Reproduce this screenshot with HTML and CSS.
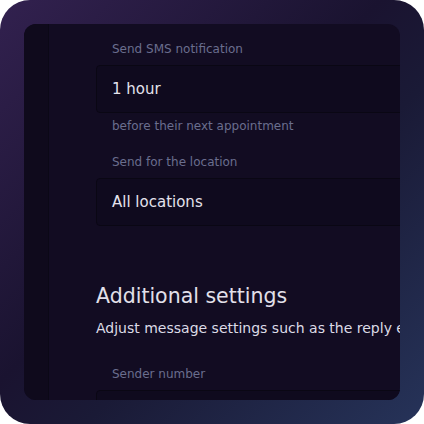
FILE: index.html
```html
<!DOCTYPE html>
<html>
<head>
<meta charset="utf-8">
<link rel="stylesheet" href="styles.css">
</head>
<body>
<div class="frame">
  <div class="panel">
    <div class="rail"></div>
    <div class="content">
      <div class="label">Send SMS notification</div>
      <div class="field">1 hour</div>
      <div class="helper">before their next appointment</div>
      <div class="label label-gap">Send for the location</div>
      <div class="field">All locations</div>
      <h2 class="heading">Additional settings</h2>
      <p class="desc">Adjust message settings such as the reply email and sender number</p>
      <div class="label label-gap2">Sender number</div>
      <div class="field"></div>
    </div>
  </div>
</div>
</body>
</html>
```

FILE: styles.css
```css
* { box-sizing: border-box; }
html, body { margin: 0; padding: 0; background: #ffffff; }
body { font-family: "DejaVu Sans", "Open Sans", sans-serif; }

.frame {
  width: 424px;
  height: 424px;
  border-radius: 30px;
  padding: 24px;
  background: linear-gradient(135deg, #32214f 0%, #1a1330 45%, #1a1a36 60%, #263359 100%);
}

.panel {
  width: 376px;
  height: 376px;
  border-radius: 12px;
  background: #120c22;
  display: flex;
  overflow: hidden;
}

.rail {
  width: 25px;
  flex: none;
  background: #0f0a1c;
  border-right: 1px solid #0b0816;
}

.content {
  flex: 1;
  min-width: 0;
  overflow: hidden;
  padding: 17px 0 0 47px;
}

.label, .helper {
  font-size: 12px;
  line-height: 16px;
  color: #6a6e8e;
  padding-left: 16px;
  white-space: nowrap;
}

.label { margin-bottom: 8px; }
.helper { margin-top: 5px; }
.label-gap { margin-top: 20px; }
.label-gap2 { margin-top: 28px; }

.field {
  width: 330px;
  height: 48px;
  border: 1px solid #0a0714;
  border-radius: 4px;
  background: #0f0a1e;
  padding-left: 15px;
  display: flex;
  align-items: center;
  font-size: 15px;
  color: #e4e2ec;
  white-space: nowrap;
}

.heading {
  margin: 56px 0 0;
  font-size: 20.5px;
  line-height: 28px;
  font-weight: 400;
  color: #e2e0ea;
  white-space: nowrap;
}

.desc {
  margin: 8px 0 0;
  font-size: 14px;
  line-height: 20px;
  color: #dcdbe6;
  white-space: nowrap;
}
```
